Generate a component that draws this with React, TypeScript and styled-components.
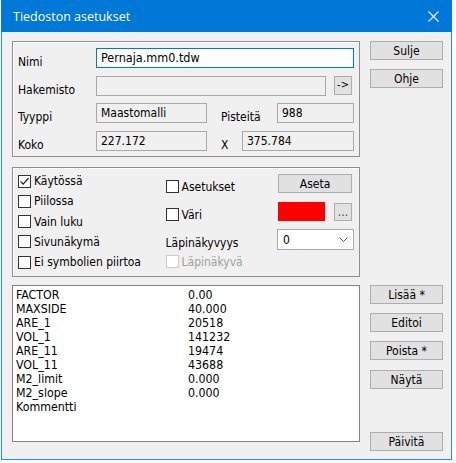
import React from "react";
import styled, { createGlobalStyle } from "styled-components";

const Global = createGlobalStyle`
  body {
    margin: 0;
    background: #fff;
    font-family: "DejaVu Sans Condensed", "DejaVu Sans", sans-serif;
    font-stretch: condensed;
    font-size: 12px;
    color: #000;
  }
`;

const Window = styled.div`
  margin-left: 1px;
  width: 451px;
  height: 460px;
  box-sizing: border-box;
  border: 1px solid #2b88d8;
  border-top: none;
  background: #f0f0f0;
  display: flex;
  flex-direction: column;
`;

const TitleBar = styled.div`
  height: 32px;
  margin: 0 -1px;
  padding: 0 13px 0 12px;
  background: #0078d7;
  color: #fff;
  display: flex;
  align-items: center;
  font-family: "Open Sans", "Noto Sans", sans-serif;
  font-stretch: normal;
  font-size: 12.5px;
`;

const TitleText = styled.span`
  flex: 1;
  margin-top: 1px;
`;

const Body = styled.div`
  flex: 1;
  display: flex;
  padding: 9px 8px 8px 10px;
`;

const LeftCol = styled.div`
  width: 348px;
  display: flex;
  flex-direction: column;
`;

const RightCol = styled.div`
  width: 73px;
  margin-left: 10px;
  display: flex;
  flex-direction: column;
`;

const Group = styled.div<{ $h: number; $mb?: number }>`
  height: ${(p) => p.$h}px;
  margin-bottom: ${(p) => p.$mb ?? 0}px;
  box-sizing: border-box;
  border: 1px solid #8f8f8f;
  box-shadow: inset 1px 1px 0 #fff;
`;

const FileGroup = styled(Group)`
  padding: 6px 5px 0 5px;
  display: flex;
  flex-direction: column;
  gap: 7.67px;
`;

const Row = styled.div`
  display: flex;
  height: 20px;
`;

const Label = styled.div<{ $w: number }>`
  width: ${(p) => p.$w}px;
  padding-top: 7px;
  line-height: 14px;
  white-space: nowrap;
`;

const Field = styled.div<{ $w: number; $focus?: boolean; $white?: boolean }>`
  width: ${(p) => p.$w}px;
  height: 20px;
  box-sizing: border-box;
  border: 1px solid ${(p) => (p.$focus ? "#0078d7" : "#a9a9a9")};
  background: ${(p) => (p.$white ? "#fff" : "#f0f0f0")};
  padding: 0 4px;
  line-height: 18px;
  font-size: ${(p) => (p.$focus ? "12.5px" : "12px")};
  white-space: nowrap;
`;

const Button = styled.button<{ $w?: number; $h?: number; $mt?: number }>`
  width: ${(p) => p.$w ?? 73}px;
  height: ${(p) => p.$h ?? 19}px;
  margin-top: ${(p) => p.$mt ?? 0}px;
  padding: 0;
  box-sizing: border-box;
  border: 1px solid #adadad;
  background: #e1e1e1;
  font: inherit;
  font-size: 12px;
  color: #000;
  line-height: 16px;
  flex-shrink: 0;
`;

const OptionsGroup = styled(Group)`
  display: flex;
  padding-left: 5px;
`;

const CheckCol = styled.div`
  width: 147px;
  padding-top: 3px;
  display: flex;
  flex-direction: column;
`;

const CheckRow = styled.div<{ $drop?: number; $disabled?: boolean }>`
  display: flex;
  align-items: center;
  height: 20.25px;
  padding-top: ${(p) => p.$drop ?? 0}px;
  box-sizing: border-box;
  white-space: nowrap;
  color: ${(p) => (p.$disabled ? "#a0a0a0" : "#000")};
`;

const Box = styled.span<{ $disabled?: boolean }>`
  width: 13px;
  height: 13px;
  box-sizing: border-box;
  border: 1px solid ${(p) => (p.$disabled ? "#cccccc" : "#333")};
  background: #fff;
  margin-right: 3px;
  display: inline-flex;
  align-items: center;
  justify-content: center;
  flex-shrink: 0;
`;

const SideCol = styled.div`
  flex: 1;
  padding-top: 6px;
  margin-left: 0.5px;
  display: flex;
  flex-direction: column;
`;

const SideRow = styled.div<{ $h: number; $mt?: number }>`
  display: flex;
  align-items: center;
  height: ${(p) => p.$h}px;
  margin-top: ${(p) => p.$mt ?? 0}px;
`;

const SideLabel = styled.div`
  width: 112.5px;
  display: flex;
  align-items: center;
  padding-top: 6px;
  white-space: nowrap;
`;

const Swatch = styled.div`
  width: 47px;
  height: 19px;
  background: #ff0000;
  margin-right: 9px;
`;

const Select = styled.div`
  width: 77px;
  height: 21px;
  margin-left: -1px;
  box-sizing: border-box;
  border: 1px solid #a9a9a9;
  background: #fff;
  display: flex;
  align-items: center;
  justify-content: space-between;
  padding: 0 5px 0 5px;
`;

const List = styled.div`
  height: 157px;
  box-sizing: border-box;
  border: 1px solid #828282;
  background: #fff;
  padding: 1.5px 3px;
  display: grid;
  grid-template-columns: 172px 1fr;
  grid-auto-rows: 14px;
  align-content: start;
  line-height: 14px;
  font-size: 12.3px;
`;

const Check = ({ checked }: { checked?: boolean }) => (
  <svg width="11" height="11" viewBox="0 0 11 11">
    {checked && <path d="M1.5 5.5 L4.2 8.2 L9.5 2" fill="none" stroke="#222" strokeWidth="1.2" />}
  </svg>
);

const CheckItem = ({
  label,
  checked,
  disabled,
  drop,
}: {
  label: string;
  checked?: boolean;
  disabled?: boolean;
  drop?: number;
}) => (
  <CheckRow $drop={drop} $disabled={disabled}>
    <Box $disabled={disabled}>
      <Check checked={checked} />
    </Box>
    {label}
  </CheckRow>
);

const rows: [string, string][] = [
  ["FACTOR", "0.00"],
  ["MAXSIDE", "40.000"],
  ["ARE_1", "20518"],
  ["VOL_1", "141232"],
  ["ARE_11", "19474"],
  ["VOL_11", "43688"],
  ["M2_limit", "0.000"],
  ["M2_slope", "0.000"],
  ["Kommentti", ""],
];

export default function App() {
  return (
    <>
      <Global />
      <Window>
        <TitleBar>
          <TitleText>Tiedoston asetukset</TitleText>
          <svg width="11" height="11" viewBox="0 0 11 11">
            <path d="M0.5 0.5 L10.5 10.5 M10.5 0.5 L0.5 10.5" stroke="#fff" strokeWidth="1.1" />
          </svg>
        </TitleBar>
        <Body>
          <LeftCol>
            <FileGroup $h={116} $mb={10}>
              <Row>
                <Label $w={78}>Nimi</Label>
                <Field $w={258} $focus $white>
                  Pernaja.mm0.tdw
                </Field>
              </Row>
              <Row>
                <Label $w={78}>Hakemisto</Label>
                <Field $w={230} />
                <Button $w={18} $h={19} style={{ marginLeft: 8, fontSize: 11 }}>
                  -&gt;
                </Button>
              </Row>
              <Row>
                <Label $w={78}>Tyyppi</Label>
                <Field $w={111}>Maastomalli</Field>
                <Label $w={56} style={{ marginLeft: 14 }}>
                  Pisteitä
                </Label>
                <Field $w={77}>988</Field>
              </Row>
              <Row>
                <Label $w={78}>Koko</Label>
                <Field $w={111}>227.172</Field>
                <Label $w={21} style={{ marginLeft: 14 }}>
                  X
                </Label>
                <Field $w={112}>375.784</Field>
              </Row>
            </FileGroup>

            <OptionsGroup $h={110} $mb={8}>
              <CheckCol>
                <CheckItem label="Käytössä" checked />
                <CheckItem label="Piilossa" />
                <CheckItem label="Vain luku" />
                <CheckItem label="Sivunäkymä" />
                <CheckItem label="Ei symbolien piirtoa" />
              </CheckCol>
              <SideCol>
                <SideRow $h={19}>
                  <SideLabel>
                    <Box>
                      <Check />
                    </Box>
                    Asetukset
                  </SideLabel>
                  <Button $w={74}>Aseta</Button>
                </SideRow>
                <SideRow $h={19} $mt={9}>
                  <SideLabel>
                    <Box>
                      <Check />
                    </Box>
                    Väri
                  </SideLabel>
                  <Swatch />
                  <Button $w={18} $h={18} style={{ color: "#444", lineHeight: "14px" }}>
                    ...
                  </Button>
                </SideRow>
                <SideRow $h={21} $mt={8}>
                  <SideLabel>Läpinäkyvyys</SideLabel>
                  <Select>
                    <span>0</span>
                    <svg width="9" height="5" viewBox="0 0 9 5">
                      <path d="M0.5 0.5 L4.5 4.5 L8.5 0.5" fill="none" stroke="#555" strokeWidth="1" />
                    </svg>
                  </Select>
                </SideRow>
                <CheckItem label="Läpinäkyvä" disabled drop={3} />
              </SideCol>
            </OptionsGroup>

            <List>
              {rows.map(([k, v]) => (
                <React.Fragment key={k}>
                  <span>{k}</span>
                  <span>{v}</span>
                </React.Fragment>
              ))}
            </List>
          </LeftCol>

          <RightCol>
            <Button>Sulje</Button>
            <Button $mt={9}>Ohje</Button>
            <Button $mt={197}>Lisää *</Button>
            <Button $mt={9}>Editoi</Button>
            <Button $mt={9}>Poista *</Button>
            <Button $mt={10}>Näytä</Button>
            <Button style={{ marginTop: "auto" }}>Päivitä</Button>
          </RightCol>
        </Body>
      </Window>
    </>
  );
}
